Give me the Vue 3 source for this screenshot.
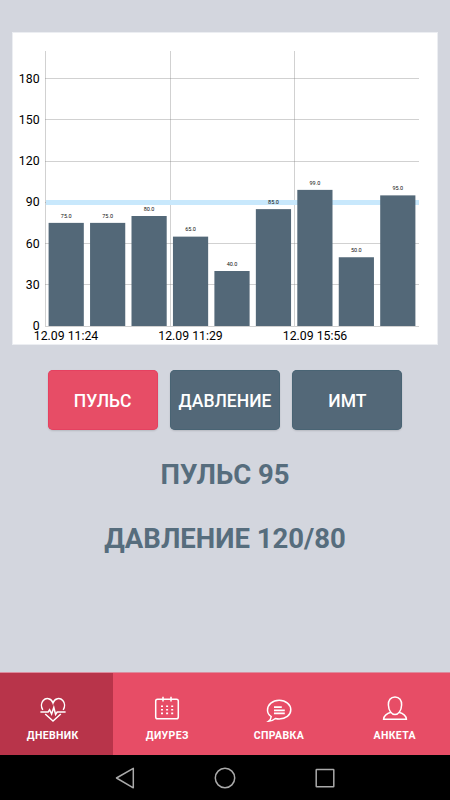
<script setup>
import { ref } from 'vue'

const base = 294
const left = 33.5
const scale = 1.375
const slot = 41.45

const ticks = [0, 30, 60, 90, 120, 150, 180]
const values = [75, 75, 80, 65, 40, 85, 99, 50, 95]
const dates = [
  { x: 54, label: '12.09 11:24' },
  { x: 178.5, label: '12.09 11:29' },
  { x: 303, label: '12.09 15:56' }
]

const y = (value) => base - value * scale
const gridY = (value) => Math.floor(y(value)) + 0.5

const bars = values.map((value, i) => ({
  value,
  x: left + i * slot + 3.1,
  y: y(value)
}))

const modes = ['ПУЛЬС', 'ДАВЛЕНИЕ', 'ИМТ']
const mode = ref('ПУЛЬС')

const tabs = [
  { id: 'diary', label: 'ДНЕВНИК' },
  { id: 'diuresis', label: 'ДИУРЕЗ' },
  { id: 'help', label: 'СПРАВКА' },
  { id: 'profile', label: 'АНКЕТА' }
]
const tab = ref('diary')
</script>

<template>
  <div class="screen">
    <main class="content">
      <div class="card">
        <svg class="chart" viewBox="0 0 426 313" width="426" height="313">
          <g class="grid">
            <line v-for="t in ticks" :key="t" x1="33" x2="407" :y1="gridY(t)" :y2="gridY(t)" />
            <line v-for="x in [33.5, 158.5, 282.5]" :key="x" :x1="x" :x2="x" y1="19" y2="294" />
          </g>
          <rect class="limit" x="34" y="168" width="373" height="5" />
          <g v-for="(bar, i) in bars" :key="i">
            <rect class="bar" :x="bar.x" :y="bar.y" width="35.2" :height="base - bar.y" />
            <text class="value" :x="bar.x + 17.6" :y="bar.y - 5.3">{{ bar.value }}.0</text>
          </g>
          <text v-for="t in ticks" :key="t" class="tick" x="27.6" :y="y(t) + 4.2">{{ t }}</text>
          <text v-for="d in dates" :key="d.label" class="date" :x="d.x" y="308.4">{{ d.label }}</text>
        </svg>
      </div>

      <div class="modes">
        <button
          v-for="m in modes"
          :key="m"
          class="mode"
          :class="{ active: m === mode }"
          @click="mode = m"
        >{{ m }}</button>
      </div>

      <div class="readings">
        <p class="reading">ПУЛЬС 95</p>
        <p class="reading">ДАВЛЕНИЕ 120/80</p>
      </div>
    </main>

    <nav class="tabs">
      <a
        v-for="t in tabs"
        :key="t.id"
        class="tab"
        :class="[t.id, { active: t.id === tab }]"
        @click="tab = t.id"
      >
        <svg class="icon" viewBox="0 0 28 28" width="28" height="28" aria-hidden="true">
          <g v-if="t.id === 'diary'">
            <path d="M3.8 14.8C2 12 2 8 4.2 5.5C7 2.4 12.3 3 14 8C15.7 3 21 2.4 23.8 5.5C26 8 26 12 24.2 14.8" />
            <path d="M6.2 19L14 26L21.8 19" />
            <path d="M1.4 17H9.2L10.6 14.8L12.6 19L14.8 12.5L16.6 19.5L18.2 17H26.6" />
          </g>
          <g v-else-if="t.id === 'diuresis'">
            <rect x="2.7" y="4.3" width="22.6" height="19.4" rx="1.8" />
            <path d="M10 1.7V6.5M18 1.7V6.5" />
            <path class="dots" d="M8 11.2H20.2M8 14.8H20.2M8 18.4H20.2" />
          </g>
          <g v-else-if="t.id === 'help'">
            <path d="M6.2 21.5C3.5 19.7 2.5 17.5 2.5 15.2C2.5 9.5 7.5 5.3 14.2 5.3S25.8 9.5 25.8 14.8S20.5 24 14.2 24C12.8 24 11.5 23.8 10.3 23.5C8.3 25.3 6 26.3 3.5 26.3C5.3 25 6.1 23.5 6.2 21.5Z" />
            <path class="lines" d="M9 12.2H16.8M9 15.3H19.8M9 18.4H19.8" />
          </g>
          <g v-else>
            <path d="M14 1.9C9.5 1.9 7.2 5.5 7.4 10C7.6 15.5 10.5 19.5 14 19.5S20.4 15.5 20.6 10C20.8 5.5 18.5 1.9 14 1.9Z" />
            <path d="M10.2 17.3C7 18.2 3 19.5 2.6 24.2H25.4C25 19.5 21 18.2 17.8 17.3" />
          </g>
        </svg>
        <span class="label">{{ t.label }}</span>
      </a>
    </nav>

    <div class="system-bar">
      <svg viewBox="0 0 24 24" width="24" height="24" aria-hidden="true">
        <path d="M20.3 2.3V21.8L3.5 12Z" />
      </svg>
      <svg viewBox="0 0 24 24" width="24" height="24" aria-hidden="true">
        <circle cx="12" cy="12" r="9.7" />
      </svg>
      <svg viewBox="0 0 24 24" width="24" height="24" aria-hidden="true">
        <rect x="3.2" y="3.4" width="17.6" height="17.4" rx="0.5" />
      </svg>
    </div>
  </div>
</template>

<style>
body {
  margin: 0;
}
</style>

<style scoped>
.screen {
  display: flex;
  flex-direction: column;
  width: 450px;
  height: 800px;
  overflow: hidden;
  background: #d3d6de;
  font-family: Roboto, sans-serif;
}

.content {
  flex: 1;
  display: flex;
  flex-direction: column;
  align-items: center;
  padding-top: 32px;
}

.card {
  box-sizing: border-box;
  width: 426px;
  height: 313px;
  background: #fff;
  box-shadow: inset 0 0 0 1px #eceef2;
}

.chart {
  display: block;
}

.grid line {
  stroke: rgba(128, 128, 128, 0.36);
  stroke-width: 1;
}

.limit {
  fill: #c8e8fc;
}

.bar {
  fill: #536878;
}

.value {
  font-size: 5.5px;
  text-anchor: middle;
  fill: #111;
}

.tick {
  font-size: 12.3px;
  text-anchor: end;
}

.date {
  font-size: 12.3px;
  text-anchor: middle;
}

.modes {
  display: flex;
  gap: 12.4px;
  margin-top: 25px;
}

.mode {
  width: 110px;
  height: 60px;
  padding: 2px 0 0;
  border: 0;
  border-radius: 5px;
  background: #536878;
  box-shadow: inset 0 0 0 0.5px #406071, 0 1px 2px rgba(0, 0, 0, 0.14);
  color: #fff;
  font: 500 17.5px Roboto, sans-serif;
  cursor: pointer;
}

.mode.active {
  background: #e74d66;
  box-shadow: inset 0 0 0 0.5px #e4365a, 0 1px 2px rgba(0, 0, 0, 0.14);
}

.readings {
  display: flex;
  flex-direction: column;
  align-items: center;
  gap: 28px;
  margin-top: 27px;
}

.reading {
  margin: 0;
  line-height: 36px;
  font-size: 27.5px;
  font-weight: 700;
  color: #566d7d;
}

.tabs {
  display: grid;
  grid-template-columns: repeat(4, 1fr);
  height: 82px;
  border-top: 1px solid #dc8c9e;
  background: #e74d66;
}

.tab {
  box-sizing: border-box;
  display: flex;
  flex-direction: column;
  align-items: center;
  padding-top: 22px;
  color: #fff;
  cursor: pointer;
}

.tab.active {
  background: #b8344a;
}

.tab.diary {
  padding-right: 7px;
}

.tab.diuresis {
  padding-right: 3px;
}

.tab.help {
  padding-right: 4.5px;
}

.tab.profile {
  padding-left: 2px;
}

.icon {
  fill: none;
  stroke: #fff;
  stroke-width: 1.5;
}

.dots {
  stroke-width: 1.6;
  stroke-dasharray: 2 3.1;
}

.lines {
  stroke-width: 1.8;
}

.label {
  margin-top: 6px;
  font-size: 10.5px;
  font-weight: 700;
  line-height: 14px;
  letter-spacing: 0.35px;
}

.system-bar {
  display: flex;
  justify-content: center;
  align-items: center;
  gap: 76px;
  height: 45px;
  background: #000;
}

.system-bar svg {
  fill: none;
  stroke: #aaa;
  stroke-width: 1.5;
  stroke-linejoin: round;
}
</style>
